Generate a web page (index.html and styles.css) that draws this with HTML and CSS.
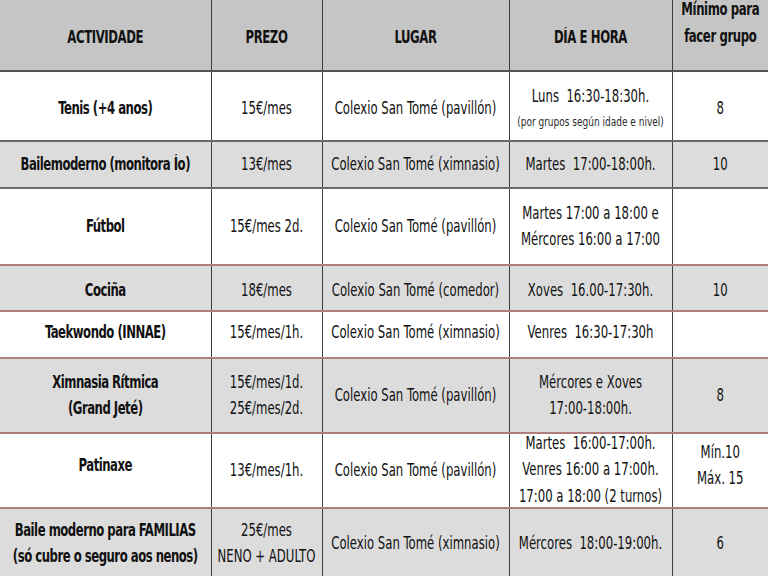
FILE: index.html
```html
<!DOCTYPE html>
<html lang="gl">
<head>
<meta charset="utf-8">
<title>Actividades</title>
<link rel="stylesheet" href="styles.css">
</head>
<body>
<table class="grid">
  <colgroup>
    <col class="c1"><col class="c2"><col class="c3"><col class="c4"><col class="c5">
  </colgroup>
  <thead>
    <tr class="head">
      <th><span class="t">ACTIVIDADE</span></th>
      <th><span class="t">PREZO</span></th>
      <th><span class="t">LUGAR</span></th>
      <th><span class="t">DÍA E HORA</span></th>
      <th class="minh"><span class="t min">Mínimo para<br>facer grupo</span></th>
    </tr>
  </thead>
  <tbody>
    <tr class="r1 white gline">
      <td class="act"><span class="t">Tenis (+4 anos)</span></td>
      <td><span class="t">15€/mes</span></td>
      <td><span class="t">Colexio San Tomé (pavillón)</span></td>
      <td><span class="t luns">Luns&nbsp; 16:30-18:30h.<br><span class="small">(por grupos según idade e nivel)</span></span></td>
      <td><span class="t">8</span></td>
    </tr>
    <tr class="r2 grey gline">
      <td class="act"><span class="t">Bailemoderno (monitora Ío)</span></td>
      <td><span class="t">13€/mes</span></td>
      <td><span class="t">Colexio San Tomé (ximnasio)</span></td>
      <td><span class="t">Martes&nbsp; 17:00-18:00h.</span></td>
      <td><span class="t">10</span></td>
    </tr>
    <tr class="r3 white rline">
      <td class="act"><span class="t">Fútbol</span></td>
      <td><span class="t">15€/mes 2d.</span></td>
      <td><span class="t">Colexio San Tomé (pavillón)</span></td>
      <td><span class="t">Martes 17:00 a 18:00 e<br>Mércores 16:00 a 17:00</span></td>
      <td></td>
    </tr>
    <tr class="r4 grey rline">
      <td class="act"><span class="t">Cociña</span></td>
      <td><span class="t">18€/mes</span></td>
      <td><span class="t">Colexio San Tomé (comedor)</span></td>
      <td><span class="t">Xoves&nbsp; 16.00-17:30h.</span></td>
      <td><span class="t">10</span></td>
    </tr>
    <tr class="r5 white rline">
      <td class="act"><span class="t">Taekwondo (INNAE)</span></td>
      <td><span class="t">15€/mes/1h.</span></td>
      <td><span class="t">Colexio San Tomé (ximnasio)</span></td>
      <td><span class="t">Venres&nbsp; 16:30-17:30h</span></td>
      <td></td>
    </tr>
    <tr class="r6 grey rline">
      <td class="act"><span class="t">Ximnasia Rítmica<br>(Grand Jeté)</span></td>
      <td><span class="t">15€/mes/1d.<br>25€/mes/2d.</span></td>
      <td><span class="t">Colexio San Tomé (pavillón)</span></td>
      <td><span class="t">Mércores e Xoves<br>17:00-18:00h.</span></td>
      <td><span class="t">8</span></td>
    </tr>
    <tr class="r7 white rline">
      <td class="act raise"><span class="t">Patinaxe</span></td>
      <td><span class="t">13€/mes/1h.</span></td>
      <td><span class="t">Colexio San Tomé (pavillón)</span></td>
      <td class="plain"><span class="t three">Martes&nbsp; 16:00-17:00h.<br>Venres 16:00 a 17:00h.<br>17:00 a 18:00 (2 turnos)</span></td>
      <td class="raise"><span class="t">Mín.10<br>Máx. 15</span></td>
    </tr>
    <tr class="r8 grey">
      <td class="act"><span class="t">Baile moderno para FAMILIAS<br>(só cubre o seguro aos nenos)</span></td>
      <td><span class="t">25€/mes<br>NENO + ADULTO</span></td>
      <td><span class="t">Colexio San Tomé (ximnasio)</span></td>
      <td><span class="t">Mércores&nbsp; 18:00-19:00h.</span></td>
      <td><span class="t">6</span></td>
    </tr>
  </tbody>
</table>
</body>
</html>
```

FILE: styles.css
```css
html, body {
  margin: 0;
  padding: 0;
  background: #ffffff;
  overflow: hidden;
}

.grid {
  width: 768px;
  border-collapse: collapse;
  table-layout: fixed;
  font-family: "DejaVu Sans Condensed", "Liberation Sans Narrow", "Liberation Sans", sans-serif;
  font-size: 13px;
  color: #111111;
}

.c1 { width: 211px; }
.c2 { width: 111px; }
.c3 { width: 187px; }
.c4 { width: 163px; }
.c5 { width: 96px; }

.grid th,
.grid td {
  padding: 0;
  text-align: center;
  vertical-align: middle;
  border-left: 1px solid #3e3e3e;
  border-right: 1px solid #3e3e3e;
  line-height: 20px;
  white-space: nowrap;
}

.grid th:first-child,
.grid td:first-child { border-left: none; }
.grid th:last-child,
.grid td:last-child { border-right: none; }

/* text is drawn tall and narrow, like the stretched original */
.t {
  display: inline-block;
  line-height: 20px;
  transform: scaleY(1.3);
  transform-origin: 50% 50%;
}

.head {
  height: 71px;
  background: #c5c5c5;
  border-bottom: 2px solid #555555;
}

.grid th {
  font-weight: bold;
  letter-spacing: -0.4px;
  padding-top: 6px;
}

.grid th.minh {
  vertical-align: top;
  padding-top: 3px;
}

.min {
  line-height: 20.8px;
}

.act {
  font-weight: bold;
  letter-spacing: -0.5px;
}

.r1 td { padding-top: 6px; }
.r4 td { padding-top: 5px; }
.r5 td { padding-bottom: 4px; }
.r7 td.raise { padding-bottom: 10px; }

.luns {
  line-height: 18px;
}

.small {
  font-size: 10px;
  color: #2a2a2a;
}

.three {
  line-height: 20.4px;
}

.white { background: #ffffff; }
.grey { background: #dcdcdc; }

.gline { border-bottom: 2px solid #6a6a6a; }
.rline { border-bottom: 2px solid #b07c7c; }

.r1 { height: 70px; }
.r2 { height: 47px; }
.r3 { height: 77px; }
.r4 { height: 46px; }
.r5 { height: 47px; }
.r6 { height: 75px; }
.r7 { height: 75px; }
.r8 { height: 70px; }
```
